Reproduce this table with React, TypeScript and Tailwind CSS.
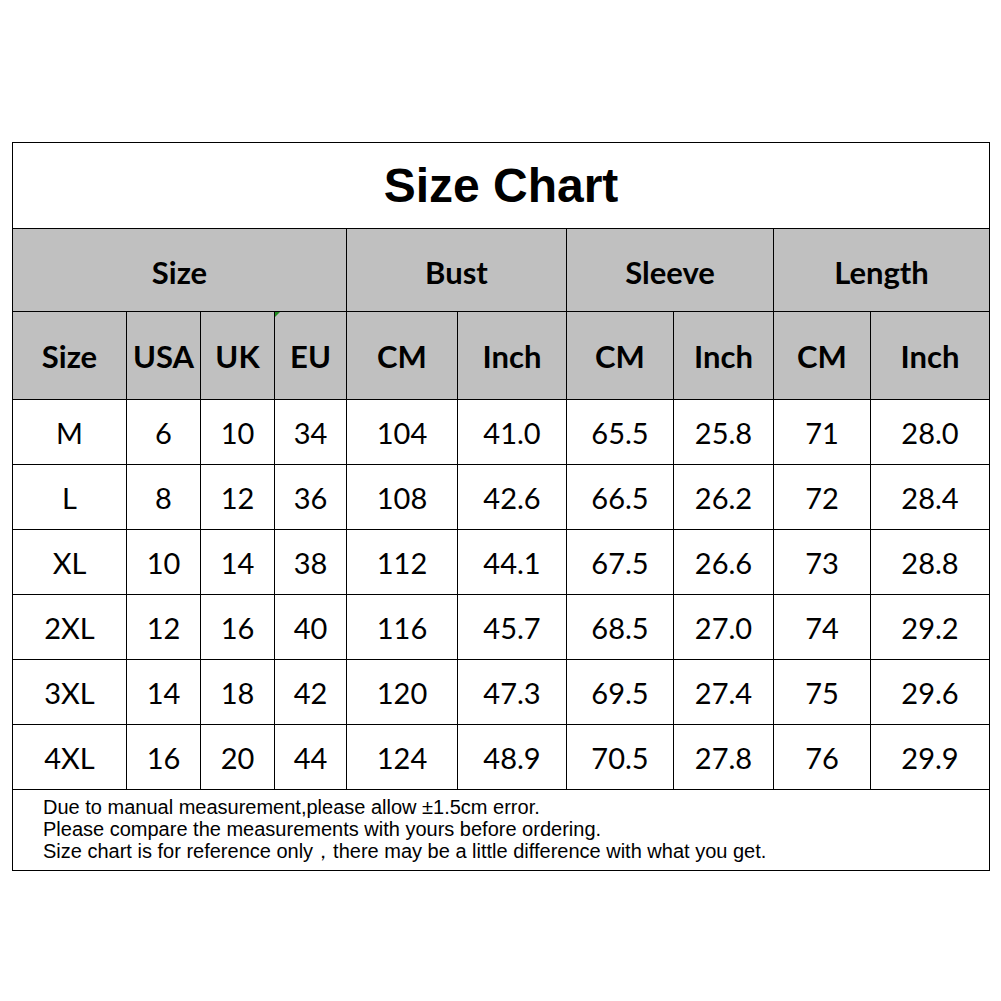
const rows = [
  ['M', '6', '10', '34', '104', '41.0', '65.5', '25.8', '71', '28.0'],
  ['L', '8', '12', '36', '108', '42.6', '66.5', '26.2', '72', '28.4'],
  ['XL', '10', '14', '38', '112', '44.1', '67.5', '26.6', '73', '28.8'],
  ['2XL', '12', '16', '40', '116', '45.7', '68.5', '27.0', '74', '29.2'],
  ['3XL', '14', '18', '42', '120', '47.3', '69.5', '27.4', '75', '29.6'],
  ['4XL', '16', '20', '44', '124', '48.9', '70.5', '27.8', '76', '29.9'],
]

const subHeads = ['Size', 'USA', 'UK', 'EU', 'CM', 'Inch', 'CM', 'Inch', 'CM', 'Inch']

const groups = [
  { label: 'Size', span: 'col-span-4' },
  { label: 'Bust', span: 'col-span-2' },
  { label: 'Sleeve', span: 'col-span-2' },
  { label: 'Length', span: 'col-span-2' },
]

export default function App() {
  return (
    <div className="min-h-[1001px] w-[1001px] bg-white pt-[142px] pl-[12px]">
      <div className="grid w-[978px] grid-cols-[113px_73px_73px_71px_110px_108px_106px_99px_96px_118px] gap-px border border-black bg-black">
        <div className="col-span-10 flex h-[85px] items-center justify-center bg-white font-['Liberation_Sans',Arial,sans-serif] text-[48px] font-bold text-black">
          Size Chart
        </div>

        {groups.map((g) => (
          <div
            key={g.label}
            className={`${g.span} flex h-[82px] items-center justify-center bg-[#c0c0c0] pt-1 font-['Lato',sans-serif] text-[31px] font-bold text-black`}
          >
            {g.label}
          </div>
        ))}

        {subHeads.map((h, i) => (
          <div
            key={i}
            className="relative flex h-[87px] items-center justify-center bg-[#c0c0c0] pt-[2px] font-['Lato',sans-serif] text-[31px] font-bold text-black"
          >
            {i === 3 && (
              <span className="absolute top-0 left-0 h-0 w-0 border-t-[5px] border-r-[5px] border-t-[#1f8a1f] border-r-transparent" />
            )}
            {h}
          </div>
        ))}

        {rows.map((r) =>
          r.map((v, i) => (
            <div
              key={r[0] + i}
              className="flex h-[64px] items-center justify-center bg-white pt-[2px] font-['Lato',sans-serif] text-[29px] text-black"
            >
              {v}
            </div>
          ))
        )}

        <div className="col-span-10 h-[80px] bg-white pt-[6px] pl-[30px] font-['Liberation_Sans',Arial,sans-serif] text-[20px] leading-[22px] text-black">
          <p>Due to manual measurement,please allow ±1.5cm error.</p>
          <p>Please compare the measurements with yours before ordering.</p>
          <p>Size chart is for reference only，there may be a little difference with what you get.</p>
        </div>
      </div>
    </div>
  )
}
